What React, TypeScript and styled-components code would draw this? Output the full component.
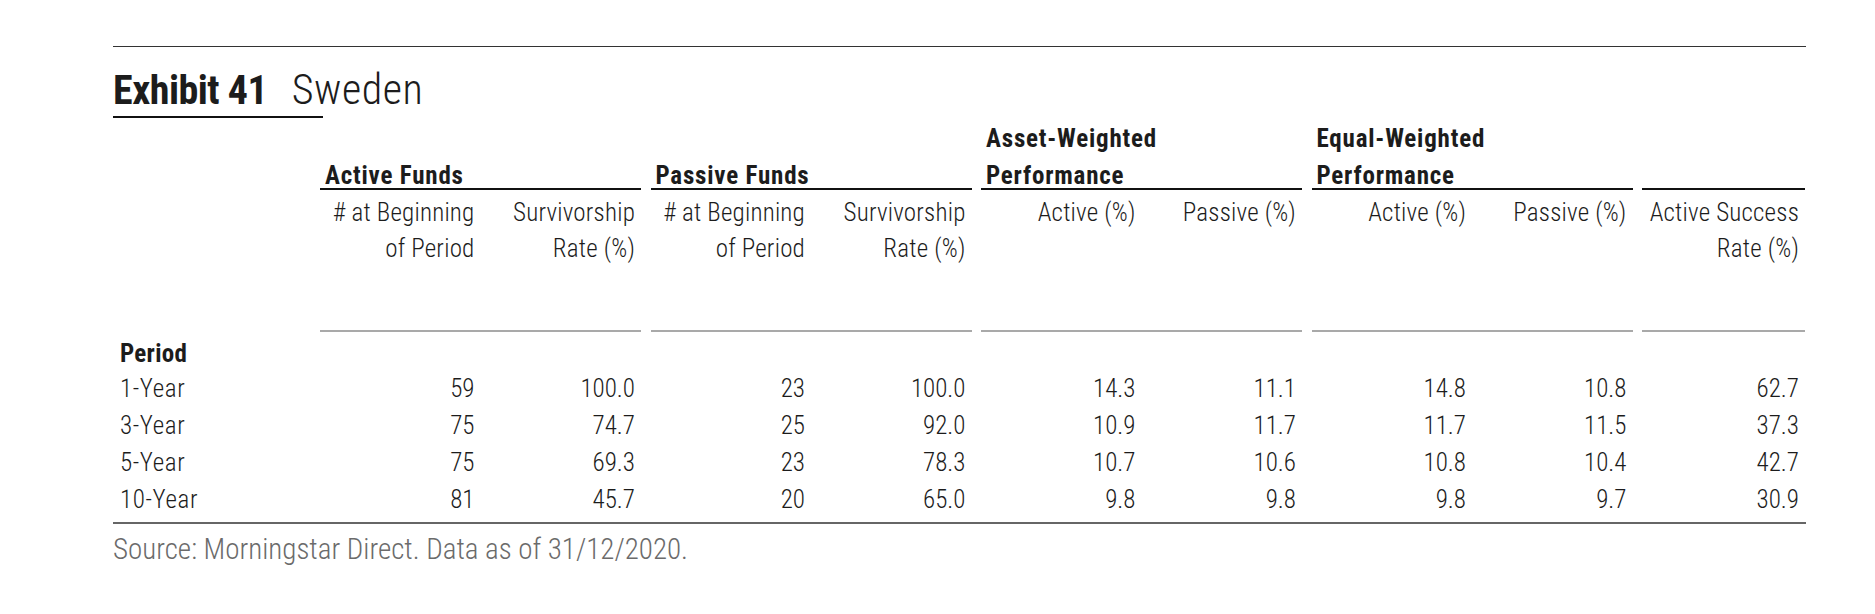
import styled, { createGlobalStyle } from 'styled-components';

const GlobalStyle = createGlobalStyle`
  body {
    margin: 0;
    background: #ffffff;
    font-family: "Roboto Condensed", "Liberation Sans", sans-serif;
    color: #1c1c1c;
  }
`;

const TextBlack = '#1c1c1c';
const RuleBlack = '#111111';
const RuleGrey = '#a9a9a9';
const SourceGrey = '#6b6b6b';

// label column, then four 2-column groups with a spacer, then the last single column
const COLUMNS = '207px repeat(4, 160.5px 160.5px 9.5px) 163px';

const groups = [
  { title: ['Active Funds'], columns: [['# at Beginning', 'of Period'], ['Survivorship', 'Rate (%)']] },
  { title: ['Passive Funds'], columns: [['# at Beginning', 'of Period'], ['Survivorship', 'Rate (%)']] },
  { title: ['Asset-Weighted', 'Performance'], columns: [['Active (%)'], ['Passive (%)']] },
  { title: ['Equal-Weighted', 'Performance'], columns: [['Active (%)'], ['Passive (%)']] },
  { title: [], columns: [['Active Success', 'Rate (%)']] },
];

const rows = [
  { period: '1-Year', values: ['59', '100.0', '23', '100.0', '14.3', '11.1', '14.8', '10.8', '62.7'] },
  { period: '3-Year', values: ['75', '74.7', '25', '92.0', '10.9', '11.7', '11.7', '11.5', '37.3'] },
  { period: '5-Year', values: ['75', '69.3', '23', '78.3', '10.7', '10.6', '10.8', '10.4', '42.7'] },
  { period: '10-Year', values: ['81', '45.7', '20', '65.0', '9.8', '9.8', '9.8', '9.7', '30.9'] },
];

const groupStart = (g: number) => 2 + g * 3;
const dataColumn = (i: number) => groupStart(Math.floor(i / 2)) + (i % 2);

const Page = styled.div`
  padding: 46px 0 40px 113px;
  width: 1693px;
`;

const TopRule = styled.div`
  border-top: 1.5px solid #333333;
`;

const TitleRow = styled.div`
  display: flex;
  align-items: baseline;
  gap: 24.5px;
  margin-top: 18.5px;
  font-size: 40px;
  line-height: 48px;
  color: ${TextBlack};
`;

const ExhibitNumber = styled.span`
  font-weight: 700;
  letter-spacing: -0.5px;
`;

const ExhibitName = styled.span`
  font-size: 42px;
  font-weight: 300;
  letter-spacing: 0.5px;
`;

const TitleUnderline = styled.div`
  width: 210px;
  height: 2.5px;
  margin-top: 1px;
  background: ${RuleBlack};
`;

const Row = styled.div`
  display: grid;
  grid-template-columns: ${COLUMNS};
  font-size: 25px;
  white-space: nowrap;
`;

const GroupRow = styled(Row)`
  height: 72px;
`;

const GroupTitle = styled.div<{ $start: number; $span: number }>`
  grid-column: ${(p) => p.$start} / span ${(p) => p.$span};
  display: flex;
  align-items: flex-end;
  border-bottom: 2.5px solid ${RuleBlack};
`;

const GroupTitleText = styled.div`
  padding-left: 5px;
  margin-bottom: -5.5px;
  font-weight: 700;
  letter-spacing: 0.8px;
  line-height: 37px;
`;

const LabelRow = styled(Row)`
  height: 141.5px;
`;

const ColumnLabel = styled.div<{ $col: number }>`
  grid-column: ${(p) => p.$col};
  padding: 5px 6px 0 0;
  text-align: right;
  line-height: 36px;
  font-weight: 300;
  letter-spacing: 0.2px;
  border-bottom: 2px solid ${RuleGrey};
`;

const PeriodRow = styled(Row)`
  margin-top: 6.5px;
  line-height: 32px;
`;

const PeriodHeading = styled.div`
  padding-left: 7px;
  font-weight: 700;
  letter-spacing: 0.3px;
`;

const DataRow = styled(Row)`
  line-height: 37px;
  font-weight: 300;
`;

const PeriodLabel = styled.div`
  padding-left: 7px;
  letter-spacing: 0.6px;
`;

const Value = styled.div<{ $col: number }>`
  grid-column: ${(p) => p.$col};
  padding-right: 6px;
  text-align: right;
`;

const BottomRule = styled.div`
  margin-top: 4px;
  border-top: 2px solid #666666;
`;

const Source = styled.div`
  margin-top: 7px;
  font-size: 29px;
  line-height: 37px;
  font-weight: 300;
  color: ${SourceGrey};
`;

const App = () => (
  <>
    <GlobalStyle />
    <Page>
      <TopRule />
      <TitleRow>
        <ExhibitNumber>Exhibit 41</ExhibitNumber>
        <ExhibitName>Sweden</ExhibitName>
      </TitleRow>
      <TitleUnderline />

      <GroupRow>
        {groups.map((group, g) => (
          <GroupTitle key={g} $start={groupStart(g)} $span={group.columns.length}>
            <GroupTitleText>
              {group.title.map((line) => (
                <div key={line}>{line}</div>
              ))}
            </GroupTitleText>
          </GroupTitle>
        ))}
      </GroupRow>

      <LabelRow>
        {groups.map((group, g) =>
          group.columns.map((lines, c) => (
            <ColumnLabel key={`${g}-${c}`} $col={groupStart(g) + c}>
              {lines.map((line) => (
                <div key={line}>{line}</div>
              ))}
            </ColumnLabel>
          )),
        )}
      </LabelRow>

      <PeriodRow>
        <PeriodHeading>Period</PeriodHeading>
      </PeriodRow>

      {rows.map((row) => (
        <DataRow key={row.period}>
          <PeriodLabel>{row.period}</PeriodLabel>
          {row.values.map((value, i) => (
            <Value key={i} $col={dataColumn(i)}>
              {value}
            </Value>
          ))}
        </DataRow>
      ))}

      <BottomRule />
      <Source>Source: Morningstar Direct. Data as of 31/12/2020.</Source>
    </Page>
  </>
);

export default App;
